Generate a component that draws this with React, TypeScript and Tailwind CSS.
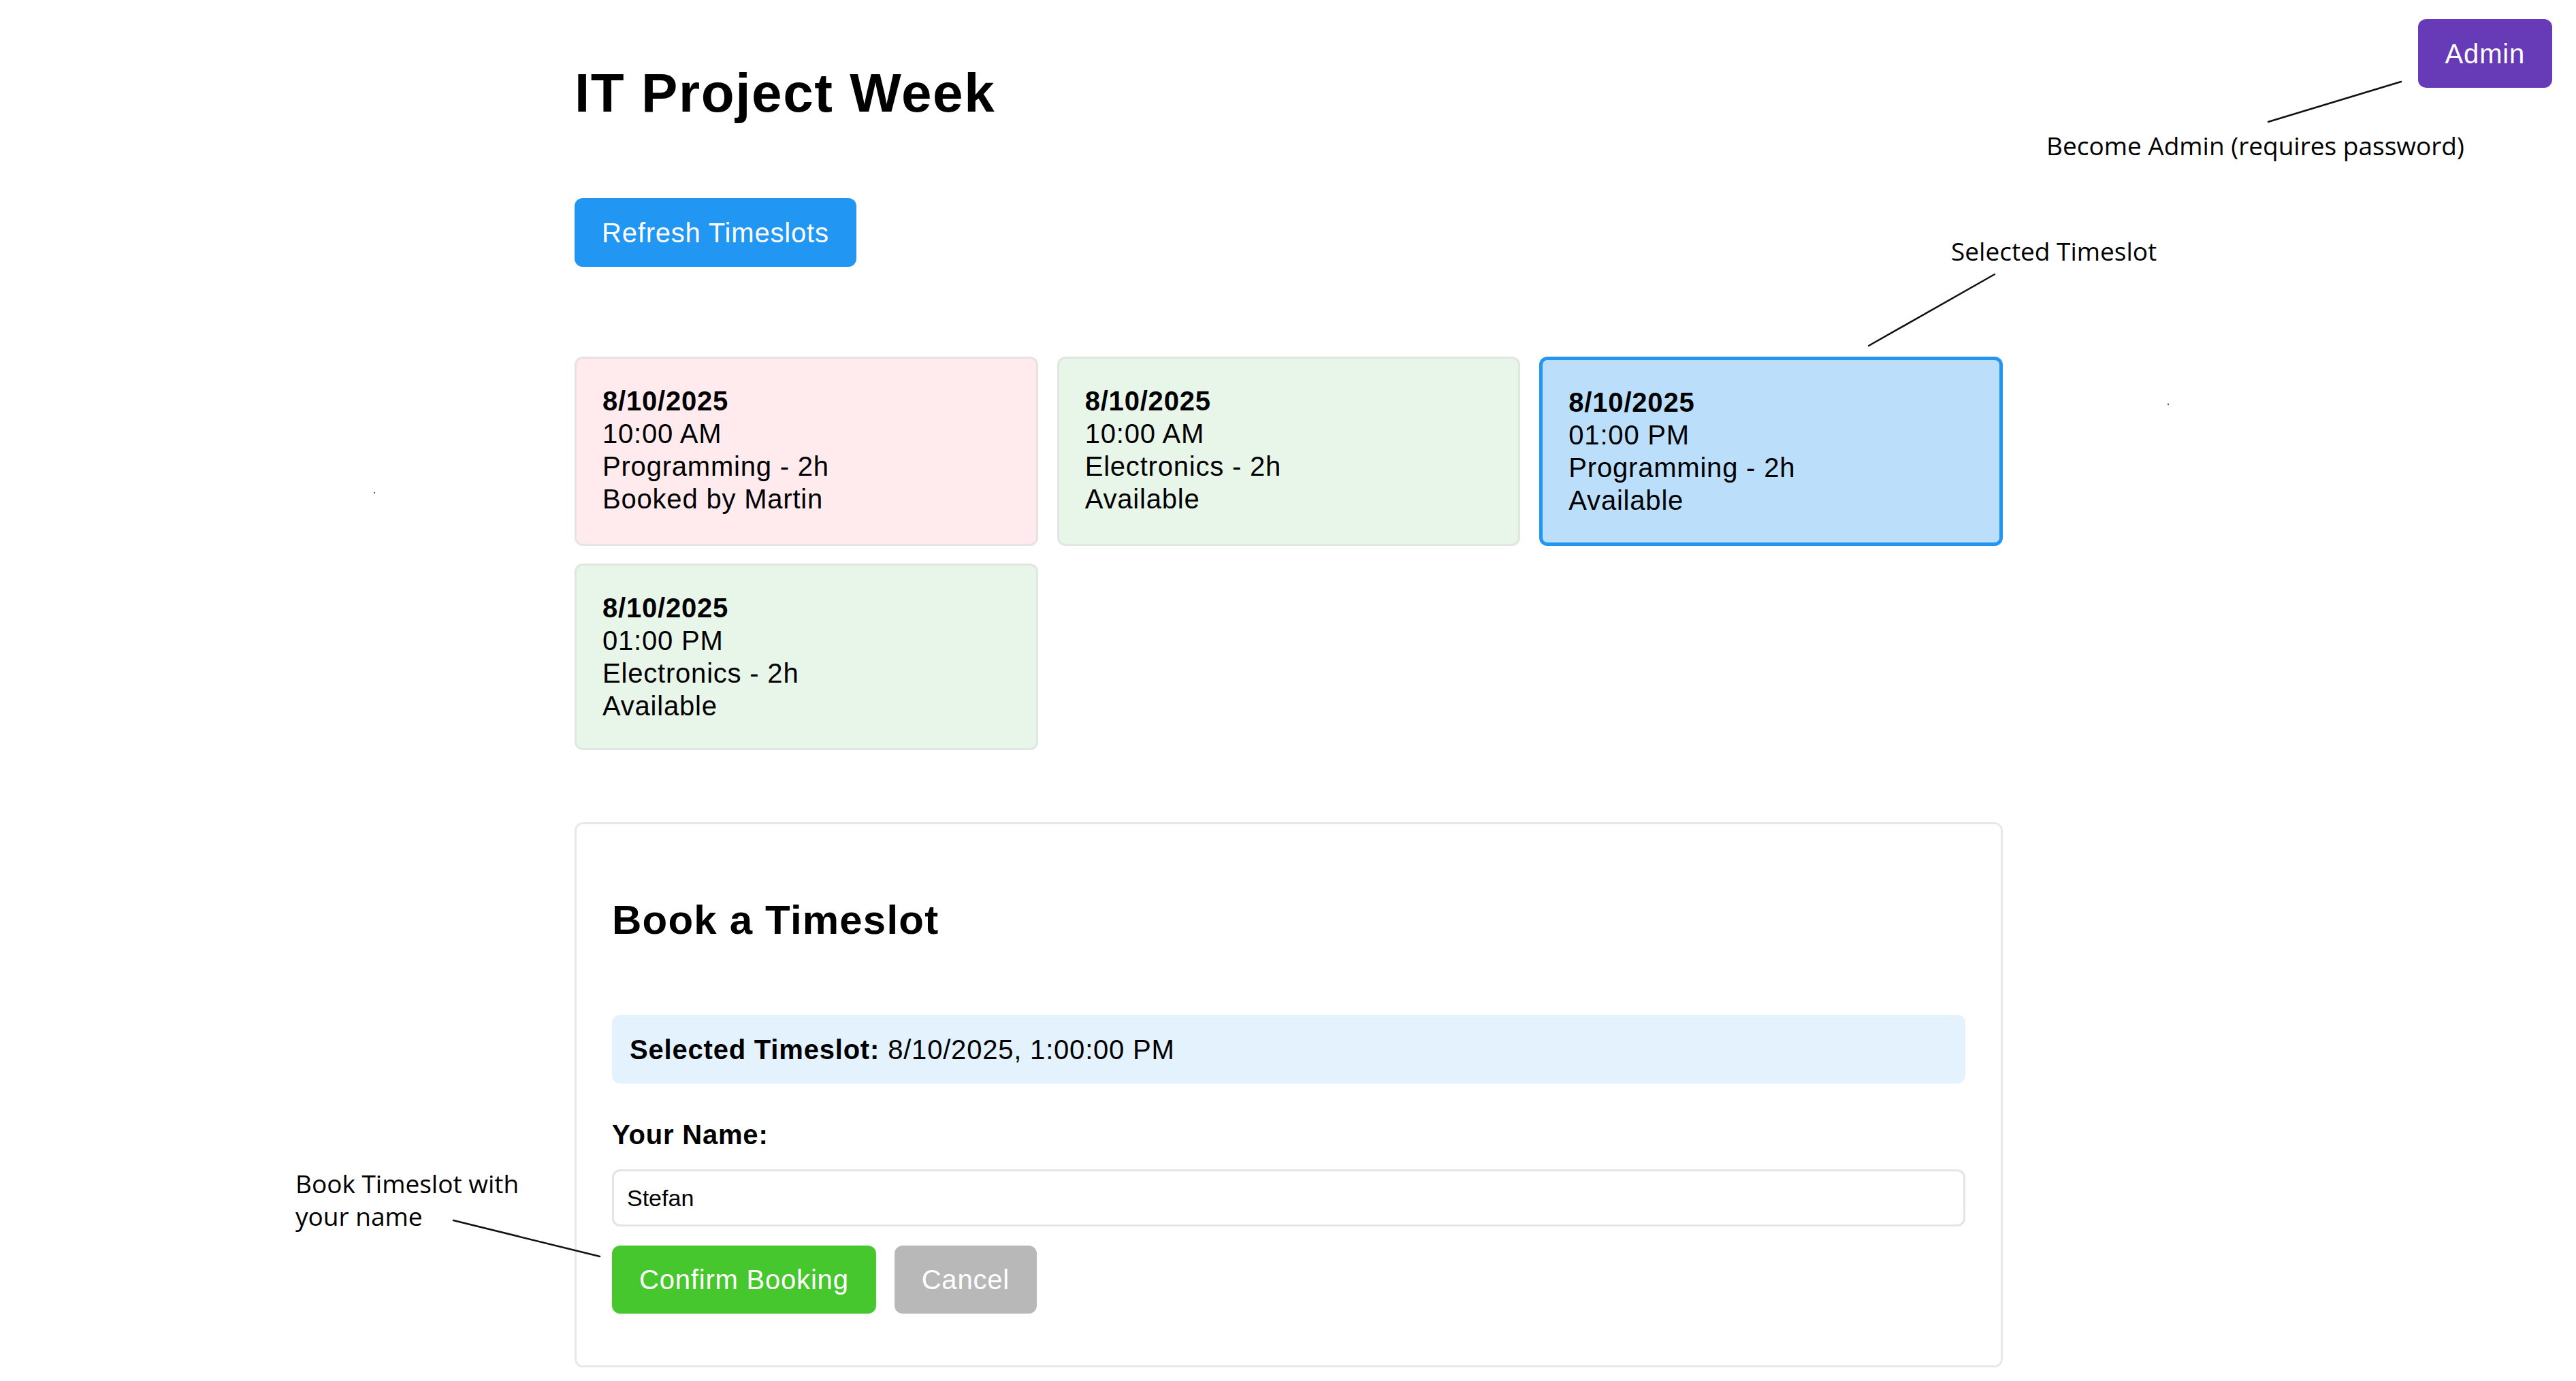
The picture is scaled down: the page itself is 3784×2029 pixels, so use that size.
type Slot = {
  date: string;
  time: string;
  topic: string;
  status: string;
  kind: "booked" | "free" | "selected";
};

const slots: Slot[] = [
  { date: "8/10/2025", time: "10:00 AM", topic: "Programming - 2h", status: "Booked by Martin", kind: "booked" },
  { date: "8/10/2025", time: "10:00 AM", topic: "Electronics - 2h", status: "Available", kind: "free" },
  { date: "8/10/2025", time: "01:00 PM", topic: "Programming - 2h", status: "Available", kind: "selected" },
  { date: "8/10/2025", time: "01:00 PM", topic: "Electronics - 2h", status: "Available", kind: "free" },
];

const cardStyle: Record<Slot["kind"], string> = {
  booked: "bg-[#ffebee] border-[3px] border-[#e8e2e3]",
  free: "bg-[#e8f5e9] border-[3px] border-[#e0e6e0]",
  selected: "bg-[#bbdefb] border-[5px] border-[#2196f3]",
};

export default function App() {
  return (
    <div className="relative w-[3784px] h-[2029px] overflow-hidden bg-white text-black tracking-[0.8px] font-['Liberation_Sans',Arial,sans-serif]">
      {/* Admin button */}
      <button className="absolute top-[28px] right-[35px] h-[101px] px-[40px] rounded-[12px] bg-[#673ab7] text-white text-[40px] leading-[46px]">
        Admin
      </button>

      <div className="ml-[844px] w-[2098px]">
        <h1 className="pt-[91px] text-[80px] leading-[92px] font-bold tracking-[1.6px]">IT Project Week</h1>

        <button className="block mt-[108px] h-[101px] px-[40px] rounded-[12px] bg-[#2196f3] text-white text-[40px] leading-[46px]">
          Refresh Timeslots
        </button>

        {/* Timeslot cards */}
        <div className="mt-[132px] grid grid-cols-3 gap-x-[28px] gap-y-[26px]">
          {slots.map((s, i) => (
            <div
              key={i}
              className={`rounded-[12px] px-[38px] py-[38px] text-[40px] leading-[48px] ${cardStyle[s.kind]}`}
            >
              <div className="font-bold">{s.date}</div>
              <div>{s.time}</div>
              <div>{s.topic}</div>
              <div>{s.status}</div>
            </div>
          ))}
        </div>

        {/* Booking form */}
        <div className="mt-[106px] rounded-[12px] border-[3px] border-[#e8e8e8] px-[52px] pt-[106px] pb-[76px]">
          <h2 className="text-[60px] leading-[69px] font-bold tracking-[1.2px]">Book a Timeslot</h2>

          <div className="mt-[105px] flex h-[101px] items-center rounded-[12px] bg-[#e3f2fd] px-[26px] text-[40px] leading-[46px]">
            <span className="font-bold">Selected Timeslot:</span>
            <span className="ml-[12px]">8/10/2025, 1:00:00 PM</span>
          </div>

          <label className="mt-[52px] block text-[40px] leading-[46px] font-bold">Your Name:</label>
          <input
            readOnly
            value="Stefan"
            className="mt-[28px] block h-[84px] w-full rounded-[12px] border-[3px] border-[#e4e4e4] px-[19px] text-[34px] tracking-normal text-black outline-none"
          />

          <div className="mt-[28px] flex gap-[27px]">
            <button className="h-[100px] px-[40px] rounded-[12px] bg-[#47c72e] text-white text-[40px] leading-[46px]">
              Confirm Booking
            </button>
            <button className="h-[100px] px-[40px] rounded-[12px] bg-[#b8b8b8] text-white text-[40px] leading-[46px]">
              Cancel
            </button>
          </div>
        </div>
      </div>

      {/* Annotations */}
      <div className="absolute left-[3006px] top-[190px] whitespace-nowrap text-[37px] leading-[48px] tracking-normal font-['Open_Sans',sans-serif]">
        Become Admin (requires password)
      </div>
      <div className="absolute left-[2866px] top-[345px] whitespace-nowrap text-[37px] leading-[48px] tracking-normal font-['Open_Sans',sans-serif]">
        Selected Timeslot
      </div>
      <div className="absolute left-[434px] top-[1715px] text-[37px] leading-[48px] tracking-normal font-['Open_Sans',sans-serif]">
        Book Timeslot with
        <br />
        your name
      </div>

      <svg className="pointer-events-none absolute inset-0" width="3784" height="2029">
        <g stroke="#111" strokeWidth="2.5" strokeLinecap="round">
          <line x1="3527" y1="120" x2="3332" y2="179" />
          <line x1="2930" y1="403" x2="2745" y2="508" />
          <line x1="666" y1="1793" x2="881" y2="1846" />
        </g>
        <circle cx="550" cy="724" r="1.2" fill="#555" />
        <circle cx="3185" cy="594" r="1.2" fill="#555" />
      </svg>
    </div>
  );
}
